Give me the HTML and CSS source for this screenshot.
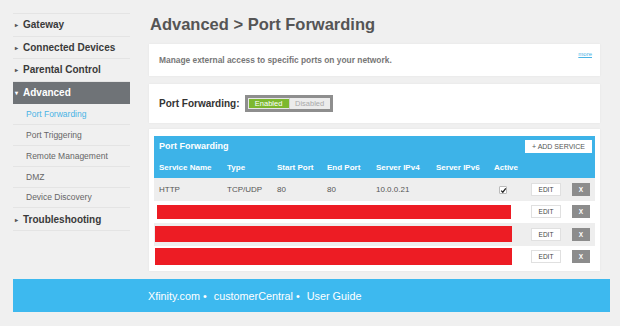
FILE: index.html
```html
<!DOCTYPE html>
<html>
<head>
<meta charset="utf-8">
<link rel="stylesheet" href="styles.css">
</head>
<body>
<div class="page">
  <nav class="sidebar">
    <div class="nav-item"><span class="arrow">&#9656;</span>Gateway</div>
    <div class="nav-item"><span class="arrow">&#9656;</span>Connected Devices</div>
    <div class="nav-item"><span class="arrow">&#9656;</span>Parental Control</div>
    <div class="nav-item active"><span class="arrow">&#9662;</span>Advanced</div>
    <div class="nav-sub current">Port Forwarding</div>
    <div class="nav-sub">Port Triggering</div>
    <div class="nav-sub">Remote Management</div>
    <div class="nav-sub">DMZ</div>
    <div class="nav-sub">Device Discovery</div>
    <div class="nav-item"><span class="arrow">&#9656;</span>Troubleshooting</div>
  </nav>
  <main class="main">
    <h1 class="title">Advanced &gt; Port Forwarding</h1>
    <section class="card intro">
      <p class="desc">Manage external access to specific ports on your network.</p>
      <a class="more">more</a>
    </section>
    <section class="card toggle-card">
      <span class="toggle-label">Port Forwarding:</span>
      <div class="toggle">
        <span class="opt on">Enabled</span>
        <span class="opt off">Disabled</span>
      </div>
    </section>
    <section class="card table-card">
      <div class="tbl-head">
        <div class="tbl-title-row">
          <span class="tbl-title">Port Forwarding</span>
          <span class="add-btn">+ ADD SERVICE</span>
        </div>
      </div>
      <table class="tbl">
        <colgroup>
          <col class="c1"><col class="c2"><col class="c3"><col class="c4"><col class="c5"><col class="c6"><col class="c7"><col class="c8"><col class="c9">
        </colgroup>
        <thead>
          <tr>
            <th>Service Name</th><th>Type</th><th>Start Port</th><th>End Port</th><th>Server IPv4</th><th>Server IPv6</th><th>Active</th><th></th><th></th>
          </tr>
        </thead>
        <tbody>
          <tr class="odd">
            <td>HTTP</td><td>TCP/UDP</td><td>80</td><td>80</td><td>10.0.0.21</td><td></td>
            <td><span class="check"><svg width="7" height="7" viewBox="0 0 7 7"><path d="M1.2 3.6 L2.8 5.2 L5.8 1.4" fill="none" stroke="#222" stroke-width="1.3"/></svg></span></td>
            <td><span class="edit">EDIT</span></td><td><span class="del">X</span></td>
          </tr>
          <tr>
            <td colspan="7" class="red-cell"><div class="redbar r2"></div></td>
            <td><span class="edit">EDIT</span></td><td><span class="del">X</span></td>
          </tr>
          <tr class="odd">
            <td colspan="7" class="red-cell"><div class="redbar r3"></div></td>
            <td><span class="edit">EDIT</span></td><td><span class="del">X</span></td>
          </tr>
          <tr>
            <td colspan="7" class="red-cell"><div class="redbar r4"></div></td>
            <td><span class="edit">EDIT</span></td><td><span class="del">X</span></td>
          </tr>
        </tbody>
      </table>
    </section>
  </main>
</div>
<footer class="footer">
  <span>Xfinity.com &bull;</span><span>customerCentral &bull;</span><span>User Guide</span>
</footer>
</body>
</html>
```
FILE: styles.css
```css
* { box-sizing: border-box; }
body {
  margin: 0;
  background: #f0f0f0;
  font-family: "Liberation Sans", Arial, sans-serif;
  color: #555;
}
.page {
  display: flex;
  padding: 13px 20px 0 13px;
  align-items: flex-start;
}
.sidebar {
  width: 117px;
  border-top: 1px solid #e4e4e4;
}
.nav-item, .nav-sub {
  height: 22.6px;
  border-bottom: 1px solid #e4e4e4;
  display: flex;
  align-items: center;
}
.nav-sub { height: 20.8px; }
.nav-item {
  font-weight: bold;
  font-size: 10px;
  color: #3a3a3a;
  padding-left: 2px;
}
.arrow {
  font-size: 6px;
  width: 8px;
  color: #555;
  display: inline-block;
}
.nav-item.active {
  background: #6f7377;
  color: #fff;
  border-bottom-color: #6f7377;
}
.nav-item.active .arrow { color: #fff; }
.nav-sub {
  font-size: 8.5px;
  color: #666;
  padding-left: 13px;
}
.nav-sub.current { color: #4ab3e5; }
.main {
  margin-left: 19px;
  width: 451px;
}
.title {
  margin: 0;
  font-size: 16.5px;
  line-height: 22px;
  padding-left: 1px;
  color: #555;
  font-weight: bold;
  height: 31px;
}
.card {
  background: #fff;
  box-shadow: 0 0 2px rgba(0,0,0,0.06);
}
.intro {
  height: 32px;
  display: flex;
  align-items: center;
  padding: 0 10px;
  position: relative;
}
.desc {
  margin: 0;
  font-size: 8.4px;
  font-weight: bold;
  color: #777;
}
.more {
  position: absolute;
  right: 8px;
  top: 7px;
  font-size: 6px;
  color: #4ab3e5;
  text-decoration: underline;
}
.toggle-card {
  margin-top: 8px;
  height: 39px;
  display: flex;
  align-items: center;
  padding-left: 10px;
}
.toggle-label {
  font-size: 10px;
  font-weight: bold;
  color: #333;
  margin-right: 5px;
}
.toggle {
  display: flex;
  border: 3px solid #8e8e8e;
  height: 17px;
  width: 88px;
  background: #e6e6e6;
}
.opt {
  flex: 1;
  font-size: 7.5px;
  display: flex;
  align-items: center;
  justify-content: center;
}
.opt.on {
  background: #7cb82f;
  color: #fff;
  margin: 1px 0 1px 1px;
}
.opt.off {
  color: #aaa;
  background: #ececec;
  border-left: 1px solid #d0d0d0;
}
.table-card {
  margin-top: 6px;
  padding: 7px 5px 3px 5px;
}
.tbl-head {
  background: #3db3e8;
}
.tbl-title-row {
  height: 20px;
  display: flex;
  align-items: center;
  justify-content: space-between;
  padding: 0 3px 0 5px;
}
.tbl-title {
  color: #fff;
  font-weight: bold;
  font-size: 9px;
}
.add-btn {
  background: #fff;
  color: #555;
  font-size: 7px;
  height: 13px;
  width: 67px;
  display: flex;
  align-items: center;
  justify-content: center;
  margin-top: 1px;
}
.tbl {
  width: 441px;
  border-collapse: collapse;
  table-layout: fixed;
}
col.c1 { width: 68px; }
col.c2 { width: 50px; }
col.c3 { width: 50px; }
col.c4 { width: 49px; }
col.c5 { width: 60px; }
col.c6 { width: 58px; }
col.c7 { width: 37px; }
col.c8 { width: 41px; }
col.c9 { width: 28px; }
.tbl th {
  background: #3db3e8;
  color: #fff;
  font-size: 8px;
  font-weight: bold;
  text-align: left;
  padding: 0 0 0 5px;
  height: 22px;
  white-space: nowrap;
}
.tbl td {
  font-size: 8px;
  color: #555;
  padding: 0 0 0 5px;
  height: 22.5px;
  white-space: nowrap;
}
.tbl tr.odd td { background: #eeeeee; }
.tbl td.red-cell { padding: 0; }
.redbar { background: #ed1c24; }
.r2 { margin-left: 3px; width: 354px; height: 14px; }
.r3 { margin-left: 1px; width: 357px; height: 16px; }
.r4 { margin-left: 1px; width: 357px; height: 17px; }
.check {
  display: inline-block;
  width: 8px;
  height: 8px;
  background: #fff;
  border: 1px solid #bbb;
  border-radius: 1px;
  margin-left: 5px;
  vertical-align: middle;
  line-height: 0;
  position: relative;
}
.check svg { position: absolute; left: 0; top: 0; }
.edit {
  display: inline-flex;
  align-items: center;
  justify-content: center;
  width: 30px;
  height: 13px;
  background: #fff;
  border: 1px solid #e0e0e0;
  font-size: 6.5px;
  color: #444;
}
.del {
  display: inline-flex;
  align-items: center;
  justify-content: center;
  width: 18px;
  height: 13px;
  background: #8c8c8c;
  color: #fff;
  font-size: 6.5px;
  font-weight: bold;
}
.footer {
  margin: 8px 10px 0 13px;
  height: 33px;
  background: #3db9ef;
  display: flex;
  align-items: center;
  padding-left: 135px;
  gap: 7px;
  color: #fff;
  font-size: 10.8px;
}
```
